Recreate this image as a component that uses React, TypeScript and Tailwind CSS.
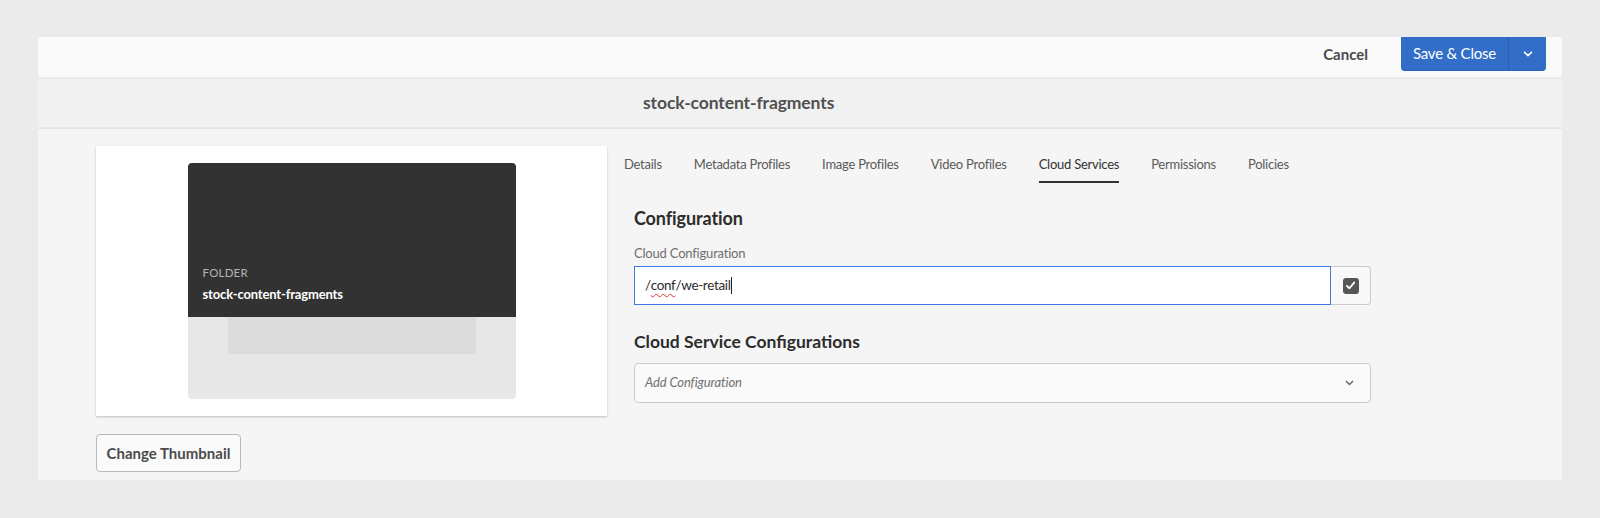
import React from "react";

const tabs = [
  "Details",
  "Metadata Profiles",
  "Image Profiles",
  "Video Profiles",
  "Cloud Services",
  "Permissions",
  "Policies",
];

function Chevron({ className }: { className?: string }) {
  return (
    <svg viewBox="0 0 10 6" className={className} fill="none">
      <path d="M1.5 1.2 L5 4.6 L8.5 1.2" stroke="currentColor" strokeWidth="1.6" strokeLinecap="round" strokeLinejoin="round" />
    </svg>
  );
}

export default function App() {
  return (
    <div className="w-[1600px] h-[518px] bg-[#ebebeb] pt-[37px] px-[38px] font-['Lato',sans-serif] overflow-hidden">
      <div className="h-[443px] bg-[#f5f5f5] flex flex-col">
        {/* Action bar */}
        <div className="h-[42px] shrink-0 bg-[#fafafa] border-b-2 border-[#e9e9e9] flex items-start justify-end pr-[16px]">
          <button className="h-[34px] px-[16px] text-[15px] font-bold text-[#4b4b4b] mr-[17px] whitespace-nowrap">Cancel</button>
          <div className="h-[34px] flex bg-[#326ec8] rounded-b-[4px] border-b border-[#2a62b8] text-white">
            <button className="h-full w-[107px] text-[15px] tracking-[-0.2px] whitespace-nowrap">Save &amp; Close</button>
            <div className="w-px bg-[#2a5fb0]" />
            <button className="h-full w-[37px] flex items-center justify-center">
              <Chevron className="w-[10px] h-[6px]" />
            </button>
          </div>
        </div>

        {/* Title bar */}
        <div className="h-[50px] shrink-0 bg-[#f1f1f1] border-b-2 border-[#e6e6e6] flex items-center pl-[605px]">
          <h1 className="text-[17.5px] font-bold text-[#505050] tracking-[-0.1px]">stock-content-fragments</h1>
        </div>

        {/* Content */}
        <div className="flex pt-[17px] pl-[58px]">
          {/* Left column */}
          <div className="w-[511px] flex flex-col items-start">
            <div className="w-[511px] h-[270px] bg-white shadow-[0_1px_2px_rgba(0,0,0,0.22)] flex justify-center pt-[17px]">
              <div className="w-[328px] h-[236px] rounded-[4px] overflow-hidden flex flex-col">
                <div className="h-[154px] bg-[#323232] flex flex-col justify-end px-[15px] pb-[14px]">
                  <div className="text-[11.5px] text-[#b4b4b4] leading-[14px] tracking-[0.2px]">FOLDER</div>
                  <div className="text-[13px] font-bold text-white leading-[18px] mt-[5px] tracking-[-0.15px]">stock-content-fragments</div>
                </div>
                <div className="flex-1 bg-[#e7e7e7] flex justify-center">
                  <div className="w-[248px] h-[37px] bg-[#dcdcdc]" />
                </div>
              </div>
            </div>
            <button className="mt-[18px] h-[38px] w-[145px] bg-[#fafafa] border border-[#b9b9b9] rounded-[4px] text-[15px] font-bold text-[#4b4b4b] whitespace-nowrap">
              Change Thumbnail
            </button>
          </div>

          {/* Right column */}
          <div className="ml-[17px] flex flex-col">
            <div className="flex gap-[32px] h-[37px]">
              {tabs.map((t) => (
                <div
                  key={t}
                  className={
                    t === "Cloud Services"
                      ? "h-full flex items-center border-b-2 border-[#323232] text-[13px] tracking-[-0.25px] text-[#323232] pt-[3px]"
                      : "h-full flex items-center border-b-2 border-transparent text-[13px] tracking-[-0.25px] text-[#5a5a5a] pt-[3px]"
                  }
                >
                  {t}
                </div>
              ))}
            </div>

            <div className="ml-[10px] w-[737px] flex flex-col">
              <h2 className="mt-[23px] text-[18px] leading-[24px] font-bold text-[#2c2c2c] tracking-[-0.1px]">Configuration</h2>
              <label className="mt-[13px] text-[13px] leading-[20px] text-[#6e6e6e] tracking-[-0.2px]">Cloud Configuration</label>
              <div className="mt-[3px] flex h-[39px]">
                <div className="flex-1 bg-white border-[1.5px] border-[#3b7de0] flex items-center pl-[10px] text-[13.5px] tracking-[-0.35px] text-[#2c2c2c]">
                  <span>/</span>
                  <span className="underline decoration-wavy decoration-[#e03030] decoration-1 underline-offset-[3px]">conf</span>
                  <span>/we-retail</span>
                  <span className="inline-block w-px h-[17px] bg-[#222] ml-px" />
                </div>
                <div className="w-[40px] bg-[#f8f8f8] border border-[#cacaca] border-l-0 rounded-r-[4px] flex items-center justify-center">
                  <span className="w-[16px] h-[16px] rounded-[3px] bg-[#555555] flex items-center justify-center">
                    <svg viewBox="0 0 12 12" className="w-[11px] h-[11px]" fill="none">
                      <path d="M2 6.4 L4.8 9 L10 2.8" stroke="white" strokeWidth="2" strokeLinecap="round" strokeLinejoin="round" />
                    </svg>
                  </span>
                </div>
              </div>

              <h2 className="mt-[25px] text-[17.5px] leading-[24px] font-bold text-[#2c2c2c]">Cloud Service Configurations</h2>
              <button className="mt-[9px] h-[40px] bg-[#fafafa] border border-[#cacaca] rounded-[4px] flex items-center justify-between pl-[10px] pr-[16px]">
                <span className="text-[13px] italic text-[#707070] tracking-[-0.1px]">Add Configuration</span>
                <Chevron className="w-[9px] h-[6px] text-[#6e6e6e]" />
              </button>
            </div>
          </div>
        </div>
      </div>
    </div>
  );
}
